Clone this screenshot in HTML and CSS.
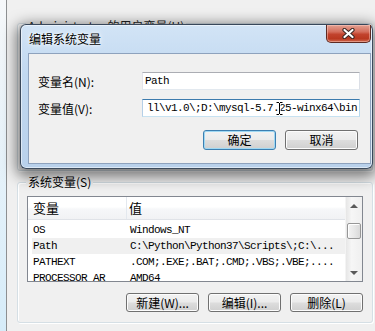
FILE: index.html
```html
<!DOCTYPE html>
<html lang="zh-CN">
<head>
  <meta charset="UTF-8">
  <meta name="viewport" content="width=device-width, initial-scale=1.0">
  <title>环境变量</title>
  <link rel="stylesheet" href="styles.css">
</head>
<body>
  <!-- 后面的 "环境变量" 窗口 -->
  <div class="win">
    <div class="group user-group">
      <span class="legend">Administrator 的用户变量(U)</span>
    </div>

    <div class="group sys-group">
      <span class="legend">系统变量(S)</span>
      <div class="list">
        <div class="list-main">
          <div class="list-head">
            <span class="col1">变量</span>
            <span class="col2">值</span>
          </div>
          <div class="rows">
            <div class="row"><span class="col1">OS</span><span class="col2">Windows_NT</span></div>
            <div class="row hot"><span class="col1">Path</span><span class="col2">C:\Python\Python37\Scripts\;C:\...</span></div>
            <div class="row"><span class="col1">PATHEXT</span><span class="col2">.COM;.EXE;.BAT;.CMD;.VBS;.VBE;....</span></div>
            <div class="row"><span class="col1">PROCESSOR_AR</span><span class="col2">AMD64</span></div>
          </div>
        </div>
        <div class="vscroll">
          <span class="sb-btn"><span class="tri up"></span></span>
          <span class="thumb"></span>
          <span class="sb-fill"></span>
          <span class="sb-btn"><span class="tri down"></span></span>
        </div>
      </div>
      <div class="list-buttons">
        <button class="btn">新建(W)...</button>
        <button class="btn">编辑(I)...</button>
        <button class="btn">删除(L)</button>
      </div>
    </div>
  </div>

  <!-- 弹出的 "编辑系统变量" 对话框 -->
  <div class="edit-dlg">
    <div class="title-bar">
      <span class="title">编辑系统变量</span>
      <span class="close">
        <svg width="13" height="11" viewBox="0 0 13 11">
          <path d="M2.5 2L10.5 9M10.5 2L2.5 9" stroke="#3a2622" stroke-width="4.2" stroke-linecap="round"/>
          <path d="M2.5 2L10.5 9M10.5 2L2.5 9" stroke="#fff" stroke-width="2.2" stroke-linecap="round"/>
        </svg>
      </span>
    </div>
    <div class="client">
      <div class="field">
        <label>变量名(N):</label>
        <div class="input">Path</div>
      </div>
      <div class="field">
        <label>变量值(V):</label>
        <div class="input scrolled">
          <span>ll\v1.0\;D:\mysql-5.7.25-winx64\bin</span>
          <svg class="ibeam" width="7" height="15" viewBox="0 0 7 15">
            <path d="M0.5 1.5h2.5M4 1.5h2.5M3.5 2v11M0.5 13.5h2.5M4 13.5h2.5" stroke="#fff" stroke-width="2.4"/>
            <path d="M0.5 1.5h2.5M4 1.5h2.5M3.5 2v11M0.5 13.5h2.5M4 13.5h2.5" stroke="#000" stroke-width="1"/>
          </svg>
        </div>
      </div>
      <div class="dlg-buttons">
        <button class="btn default">确定</button>
        <button class="btn">取消</button>
      </div>
    </div>
  </div>
</body>
</html>
```

FILE: styles.css
```css
* {
  box-sizing: border-box;
}

body {
  margin: 0;
  width: 375px;
  height: 331px;
  overflow: hidden;
  position: relative;
  background: linear-gradient(to bottom, #f6f8fa, #d6ecf9);
  font-family: "Noto Sans CJK SC", sans-serif;
  font-size: 12px;
  color: #000;
}

/* 后面的窗口 */
.win {
  margin-left: 6px;
  width: 380px;
  height: 331px;
  border-left: 1px solid #8d8f91;
  background: #f0f0f0;
  padding: 23px 0 0 10px;
}

.group {
  position: relative;
  width: 356px;
  border: 1px solid #d5dfe5;
  border-radius: 3px;
  box-shadow: inset 1px 1px 0 #fff, 1px 1px 0 #fff;
}

.legend {
  position: absolute;
  top: -8px;
  left: 8px;
  padding: 0 2px;
  line-height: 14px;
  background: #f0f0f0;
  white-space: nowrap;
}

.user-group {
  height: 148px;
  margin-bottom: 11px;
}

.user-group .legend {
  top: -5px;
  color: #222;
}

.sys-group {
  height: 141px;
  padding: 13px 9px 10px 9px;
}

/* 列表 */
.list {
  display: flex;
  width: 336px;
  height: 86px;
  border: 1px solid #828790;
  background: #fff;
  overflow: hidden;
}

.list-main {
  flex: 1;
  overflow: hidden;
}

.list-head {
  display: flex;
  height: 23px;
  border-bottom: 1px solid #e0e3e8;
  background: linear-gradient(to bottom, #fff 0%, #fff 45%, #f6f7f9 55%, #f1f2f4 100%);
  font-size: 13px;
  line-height: 22px;
}

.list-head .col1 {
  border-right: 1px solid #e3e8ee;
}

.col1 {
  width: 99px;
  flex: none;
  padding-left: 5px;
  overflow: hidden;
  white-space: nowrap;
}

.col2 {
  padding-left: 2px;
  white-space: nowrap;
}

.rows {
  padding-top: 2px;
}

.row {
  display: flex;
  height: 16px;
  line-height: 16px;
  margin-left: 4px;
  font-family: "Liberation Mono", monospace;
  font-size: 11px;
  letter-spacing: -0.6px;
}

.row .col1 {
  width: 95px;
  padding-left: 1px;
}

.row .col2 {
  padding-left: 3px;
}

.row.hot {
  background: #f0f0f0;
}

/* 滚动条 */
.vscroll {
  width: 17px;
  flex: none;
  display: flex;
  flex-direction: column;
  background: linear-gradient(to right, #e6e6e6, #f6f6f6 35%, #efefef);
  border-left: 1px solid #f4f4f4;
}

.sb-btn {
  height: 17px;
  display: flex;
  align-items: center;
  justify-content: center;
}

.tri {
  width: 0;
  height: 0;
  border-left: 4px solid transparent;
  border-right: 4px solid transparent;
}

.tri.up {
  border-bottom: 4px solid #5a5a5a;
}

.tri.down {
  border-top: 4px solid #5a5a5a;
}

.thumb {
  height: 16px;
  margin: 9px 1px 0;
  border: 1px solid #979797;
  border-radius: 2px;
  background: linear-gradient(to right, #f3f3f3, #e8e8e8 50%, #d9d9d9);
  box-shadow: inset 1px 1px 0 #fff;
}

.sb-fill {
  flex: 1;
}

/* 按钮 */
.list-buttons {
  display: flex;
  justify-content: flex-end;
  gap: 9px;
  margin-top: 11px;
}

.btn {
  width: 73px;
  height: 19px;
  padding: 0;
  border: 1px solid #707070;
  border-radius: 3px;
  background: linear-gradient(to bottom, #f2f2f2 0%, #ebebeb 48%, #dddddd 52%, #cfcfcf 100%);
  box-shadow: inset 0 0 0 1px #fcfcfc;
  font-family: "Noto Sans CJK SC", sans-serif;
  font-size: 12px;
  line-height: 16px;
  color: #000;
}

.btn.default {
  border-color: #3c7fb1;
  box-shadow: inset 0 0 0 1px #9fd8f3;
}

/* 编辑系统变量 对话框 */
.edit-dlg {
  position: absolute;
  left: 20px;
  top: 24px;
  width: 353px;
  height: 145px;
  display: flex;
  flex-direction: column;
  padding: 0 1px 4px 7px;
  border: 1px solid rgba(24, 36, 54, 0.8);
  border-radius: 6px;
  background: linear-gradient(to bottom, #d2e4f6 0%, #c1d8f0 35%, #b9d1eb 100%);
  box-shadow: 0 0 0 1px rgba(255, 255, 255, 0.5) inset, 0 4px 14px 4px rgba(0, 0, 0, 0.5);
}

.title-bar {
  display: flex;
  align-items: flex-start;
  height: 28px;
}

.title {
  padding: 7px 0 0 1px;
  line-height: 14px;
  text-shadow: 0 0 6px #fff, 0 0 3px #fff;
}

.close {
  margin-left: auto;
  width: 45px;
  height: 18px;
  display: flex;
  align-items: center;
  justify-content: center;
  border: 1px solid #5e2a23;
  border-top: none;
  border-radius: 0 0 5px 5px;
  background: linear-gradient(to bottom, #e3a192 0%, #d46e5c 40%, #c2432d 55%, #b93820 80%, #cf6a50 100%);
  box-shadow: inset 0 0 0 1px rgba(255, 210, 200, 0.45);
}

.client {
  flex: 1;
  border: 1px solid #8ea2bd;
  background: #f0f0f0;
  padding: 18px 10px 12px 9px;
}

.field {
  display: flex;
  align-items: center;
  height: 18px;
  margin-bottom: 9px;
}

.field label {
  width: 104px;
  flex: none;
}

.input {
  position: relative;
  width: 218px;
  height: 18px;
  display: flex;
  align-items: center;
  padding: 0 2px;
  border: 1px solid;
  border-color: #abadb3 #dbdfe6 #e3e9ef #e2e3ea;
  background: #fff;
  overflow: hidden;
  white-space: nowrap;
  font-family: "Liberation Mono", monospace;
  font-size: 11px;
  letter-spacing: -0.6px;
}

.input.scrolled {
  justify-content: flex-end;
  border-color: #3d7bad #b7d9ed #c7e2f1 #b5cfe7;
}

.ibeam {
  position: absolute;
  left: 133px;
  top: 1px;
}

.dlg-buttons {
  display: flex;
  justify-content: flex-end;
  gap: 9px;
  margin-top: 13px;
  margin-right: 2px;
}

.dlg-buttons .btn {
  height: 20px;
}
```
